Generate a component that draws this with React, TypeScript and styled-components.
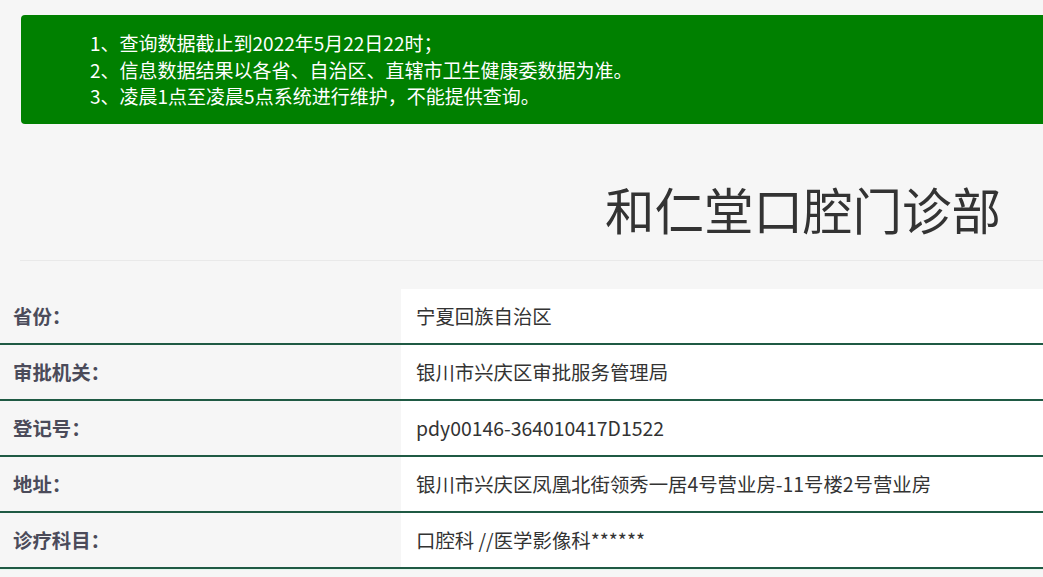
import React from "react";
import styled, { createGlobalStyle } from "styled-components";

const Global = createGlobalStyle`
  html, body { margin: 0; padding: 0; background: #f6f6f6; }
  body { font-family: "Noto Sans CJK SC", "Noto Sans", sans-serif; overflow: hidden; }
`;

const Page = styled.div`
  width: 1043px;
  min-height: 577px;
  padding-top: 15px;
  box-sizing: border-box;
`;

const Notice = styled.div`
  margin-left: 21px;
  background: #008000;
  border-radius: 4px 0 0 4px;
  color: #ffffff;
  font-size: 19px;
  line-height: 26.5px;
  padding: 15px 0 14px 69px;
  height: 109px;
  box-sizing: border-box;
`;

const NoticeLine = styled.div`
  white-space: nowrap;
`;

const TitleBar = styled.div`
  margin-left: 20px;
  height: 137px;
  box-sizing: border-box;
  border-bottom: 1px solid #e9e9e9;
  display: flex;
  justify-content: flex-end;
  align-items: flex-end;
  padding: 0 42px 27px 0;
`;

const Title = styled.h1`
  margin: 0;
  font-size: 49.5px;
  font-weight: 400;
  color: #333333;
  line-height: 1;
`;

const Table = styled.div`
  margin-top: 28px;
  display: flex;
  flex-direction: column;
`;

const Row = styled.div`
  display: grid;
  grid-template-columns: 401px 1fr;
  height: 56px;
  border-bottom: 2px solid #1f5a44;
  box-shadow: 0 1px 0 #e3f6ec;
  box-sizing: border-box;
`;

const Label = styled.div`
  display: flex;
  align-items: center;
  padding-left: 13px;
  padding-bottom: 2px;
  font-size: 19.4px;
  font-weight: 700;
  color: #4b4b5a;
  background: #f6f6f6;
`;

const Value = styled.div`
  display: flex;
  align-items: center;
  padding-left: 15px;
  padding-bottom: 2px;
  font-size: 19.4px;
  color: #333333;
  background: #ffffff;
  white-space: nowrap;
`;

const rows: [string, string][] = [
  ["省份：", "宁夏回族自治区"],
  ["审批机关：", "银川市兴庆区审批服务管理局"],
  ["登记号：", "pdy00146-364010417D1522"],
  ["地址：", "银川市兴庆区凤凰北街领秀一居4号营业房-11号楼2号营业房"],
  ["诊疗科目：", "口腔科 //医学影像科******"],
];

export default function App() {
  return (
    <Page>
      <Global />
      <Notice>
        <NoticeLine>1、查询数据截止到2022年5月22日22时；</NoticeLine>
        <NoticeLine>2、信息数据结果以各省、自治区、直辖市卫生健康委数据为准。</NoticeLine>
        <NoticeLine>3、凌晨1点至凌晨5点系统进行维护，不能提供查询。</NoticeLine>
      </Notice>
      <TitleBar>
        <Title>和仁堂口腔门诊部</Title>
      </TitleBar>
      <Table>
        {rows.map(([k, v]) => (
          <Row key={k}>
            <Label>{k}</Label>
            <Value>{v}</Value>
          </Row>
        ))}
      </Table>
    </Page>
  );
}
